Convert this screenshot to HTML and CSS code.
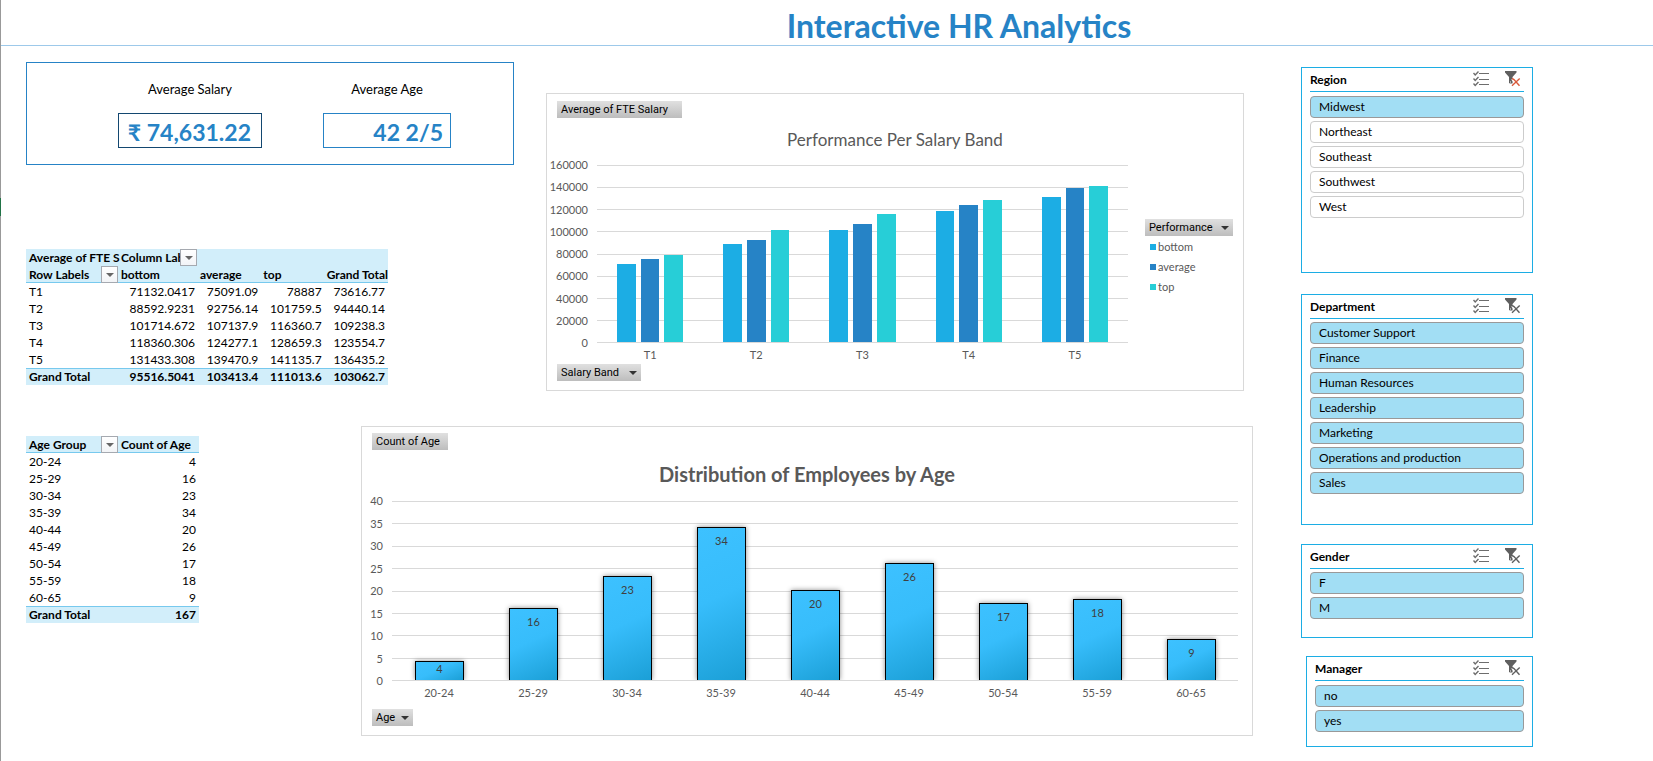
FILE: index.html
```html
<!DOCTYPE html>
<html lang="en">
<head>
<meta charset="utf-8">
<title>Interactive HR Analytics</title>
<link rel="stylesheet" href="styles.css">
</head>
<body>
<svg class="sprite" aria-hidden="true">
  <symbol id="checks" viewBox="0 0 16 16">
    <g fill="none" stroke="#6d6d6d">
      <path d="M6 2.5h10M6 8.5h10M6 13.5h10" stroke-width="1"/>
      <path d="M.5 2l1.700 1.900L5.500.500M.500 7.500l1.700 1.900L5.500 6M.500 12.500l1.700 1.900L5.500 11" stroke-width="1.400"/>
    </g>
  </symbol>
  <symbol id="funnel" viewBox="0 0 16 16">
    <path d="M0 0h11.500v1.500L7.500 6v6H6V10.500H4V6L0 1.500z" fill="#5f5f5f"/>
    <path d="M7.500 7.500l7 7M14.500 7.500l-7.500 7.500" fill="none" stroke="#fff" stroke-width="3.500"/>
    <path d="M4.500 6v6h3" fill="none" stroke="#5f5f5f"/>
    <path class="cross" d="M7 7.500l2 1 5.500 6.200M14.700 7.500L11 11l-4 3.700" fill="none" stroke-width="1.400"/>
  </symbol>
</svg>
<span class="row-marker"></span>
<header class="banner"><h1>Interactive HR Analytics</h1></header>
<main class="page">
  <div class="board">
    <div class="board-row">
      <div class="summary">
        <section class="kpis">
          <div class="kpi kpi-salary"><h2>Average Salary</h2><output>₹ 74,631.22</output></div>
          <div class="kpi kpi-age"><h2>Average Age</h2><output>42 2/5</output></div>
        </section>
        <table class="pivot pivot-salary">
          <colgroup><col class="c-label"><col class="c-wide"><col class="c-num"><col class="c-num"><col class="c-num"></colgroup>
          <thead>
            <tr><th class="over">Average of FTE S</th><th><div class="clip">Column Labels</div><button class="drop" aria-label="Filter columns"></button></th><th></th><th></th><th></th></tr>
            <tr><th>Row Labels<button class="drop" aria-label="Filter rows"></button></th><th>bottom</th><th>average</th><th>top</th><th>Grand Total</th></tr>
          </thead>
          <tbody>
            <tr><td>T1</td><td>71132.0417</td><td>75091.09</td><td>78887</td><td>73616.77</td></tr>
            <tr><td>T2</td><td>88592.9231</td><td>92756.14</td><td>101759.5</td><td>94440.14</td></tr>
            <tr><td>T3</td><td>101714.672</td><td>107137.9</td><td>116360.7</td><td>109238.3</td></tr>
            <tr><td>T4</td><td>118360.306</td><td>124277.1</td><td>128659.3</td><td>123554.7</td></tr>
            <tr><td>T5</td><td>131433.308</td><td>139470.9</td><td>141135.7</td><td>136435.2</td></tr>
          </tbody>
          <tfoot><tr><td>Grand Total</td><td>95516.5041</td><td>103413.4</td><td>111013.6</td><td>103062.7</td></tr></tfoot>
        </table>
      </div>
      <figure class="chart chart-salary">
        <button class="field field-value">Average of FTE Salary</button>
        <figcaption>Performance Per Salary Band</figcaption>
        <div class="chart-body">
          <div class="y-axis"><span>160000</span><span>140000</span><span>120000</span><span>100000</span><span>80000</span><span>60000</span><span>40000</span><span>20000</span><span>0</span></div>
          <div class="plot">
            <div class="lines"><i></i><i></i><i></i><i></i><i></i><i></i><i></i><i></i><i></i></div>
            <div class="group"><b class="bottom" style="height:44.100%"></b><b class="average" style="height:46.900%"></b><b class="top" style="height:49.300%"></b></div>
            <div class="group"><b class="bottom" style="height:55.400%"></b><b class="average" style="height:57.600%"></b><b class="top" style="height:63.300%"></b></div>
            <div class="group"><b class="bottom" style="height:63.300%"></b><b class="average" style="height:66.700%"></b><b class="top" style="height:72.400%"></b></div>
            <div class="group"><b class="bottom" style="height:74%"></b><b class="average" style="height:77.400%"></b><b class="top" style="height:80.300%"></b></div>
            <div class="group"><b class="bottom" style="height:81.900%"></b><b class="average" style="height:87%"></b><b class="top" style="height:88.200%"></b></div>
          </div>
          <div class="legend">
            <button class="field field-menu">Performance</button>
            <ul><li><i class="bottom"></i>bottom</li><li><i class="average"></i>average</li><li><i class="top"></i>top</li></ul>
          </div>
          <div class="x-axis"><span>T1</span><span>T2</span><span>T3</span><span>T4</span><span>T5</span></div>
        </div>
        <button class="field field-menu">Salary Band</button>
      </figure>
    </div>
    <div class="board-row">
      <table class="pivot pivot-age">
        <colgroup><col class="c-label"><col class="c-count"></colgroup>
        <thead><tr><th>Age Group<button class="drop" aria-label="Filter age groups"></button></th><th>Count of Age</th></tr></thead>
        <tbody>
          <tr><td>20-24</td><td>4</td></tr>
          <tr><td>25-29</td><td>16</td></tr>
          <tr><td>30-34</td><td>23</td></tr>
          <tr><td>35-39</td><td>34</td></tr>
          <tr><td>40-44</td><td>20</td></tr>
          <tr><td>45-49</td><td>26</td></tr>
          <tr><td>50-54</td><td>17</td></tr>
          <tr><td>55-59</td><td>18</td></tr>
          <tr><td>60-65</td><td>9</td></tr>
        </tbody>
        <tfoot><tr><td>Grand Total</td><td>167</td></tr></tfoot>
      </table>
      <figure class="chart chart-age">
        <button class="field field-value">Count of Age</button>
        <figcaption>Distribution of Employees by Age</figcaption>
        <div class="chart-body">
          <div class="y-axis"><span>40</span><span>35</span><span>30</span><span>25</span><span>20</span><span>15</span><span>10</span><span>5</span><span>0</span></div>
          <div class="plot">
            <div class="lines"><i></i><i></i><i></i><i></i><i></i><i></i><i></i><i></i><i></i></div>
            <div class="group"><b class="short" style="height:10.500%">4</b></div>
            <div class="group"><b style="height:40.300%">16</b></div>
            <div class="group"><b style="height:58%">23</b></div>
            <div class="group"><b style="height:85.500%">34</b></div>
            <div class="group"><b style="height:50.300%">20</b></div>
            <div class="group"><b style="height:65.500%">26</b></div>
            <div class="group"><b style="height:43%">17</b></div>
            <div class="group"><b style="height:45.300%">18</b></div>
            <div class="group"><b style="height:23%">9</b></div>
          </div>
          <div class="x-axis"><span>20-24</span><span>25-29</span><span>30-34</span><span>35-39</span><span>40-44</span><span>45-49</span><span>50-54</span><span>55-59</span><span>60-65</span></div>
        </div>
        <button class="field field-menu">Age</button>
      </figure>
    </div>
  </div>
  <aside class="slicers">
    <section class="slicer slicer-region filtered">
      <header><h2>Region</h2><button aria-label="Multi-select"><svg><use href="#checks"/></svg></button><button aria-label="Clear filter"><svg><use href="#funnel"/></svg></button></header>
      <button class="item" aria-pressed="true">Midwest</button>
      <button class="item" aria-pressed="false">Northeast</button>
      <button class="item" aria-pressed="false">Southeast</button>
      <button class="item" aria-pressed="false">Southwest</button>
      <button class="item" aria-pressed="false">West</button>
    </section>
    <section class="slicer slicer-department">
      <header><h2>Department</h2><button aria-label="Multi-select"><svg><use href="#checks"/></svg></button><button aria-label="Clear filter"><svg><use href="#funnel"/></svg></button></header>
      <button class="item" aria-pressed="true">Customer Support</button>
      <button class="item" aria-pressed="true">Finance</button>
      <button class="item" aria-pressed="true">Human Resources</button>
      <button class="item" aria-pressed="true">Leadership</button>
      <button class="item" aria-pressed="true">Marketing</button>
      <button class="item" aria-pressed="true">Operations and production</button>
      <button class="item" aria-pressed="true">Sales</button>
    </section>
    <section class="slicer slicer-gender">
      <header><h2>Gender</h2><button aria-label="Multi-select"><svg><use href="#checks"/></svg></button><button aria-label="Clear filter"><svg><use href="#funnel"/></svg></button></header>
      <button class="item" aria-pressed="true">F</button>
      <button class="item" aria-pressed="true">M</button>
    </section>
    <section class="slicer slicer-manager">
      <header><h2>Manager</h2><button aria-label="Multi-select"><svg><use href="#checks"/></svg></button><button aria-label="Clear filter"><svg><use href="#funnel"/></svg></button></header>
      <button class="item" aria-pressed="true">no</button>
      <button class="item" aria-pressed="true">yes</button>
    </section>
  </aside>
</main>
</body>
</html>
```
FILE: styles.css
```css
* { box-sizing: border-box; }
body {
  margin: 0;
  min-height: 100vh;
  border-left: 1px solid #999;
  background: #fff;
  color: #000;
  font: 12px/16px Lato, "Liberation Sans", sans-serif;
}
h1, h2, figure, ul { margin: 0; padding: 0; }
button { font: inherit; color: inherit; margin: 0; padding: 0; border: 0; background: none; }
.sprite { position: absolute; width: 0; height: 0; }
.row-marker { position: absolute; left: 0; top: 198px; width: 1px; height: 18px; background: #217346; }

.banner { border-bottom: 1px solid #9dc9ea; padding: 8px 0 1px 264px; }
.banner h1 { text-align: center; font-size: 32px; line-height: 36px; color: #2683c6; }

.page { display: flex; gap: 48px; padding: 16px 120px 14px 25px; }
.board { flex: 1; display: flex; flex-direction: column; gap: 35px; }
.board-row { display: flex; align-items: flex-start; }

.summary { display: flex; flex-direction: column; flex-shrink: 0; gap: 84px; width: 488px; }
.kpis { display: flex; gap: 61px; padding: 18px 0 16px 91px; border: 1px solid #2683c6; }
.kpi { display: flex; flex-direction: column; gap: 16px; }
.kpi h2 { font-size: 13px; line-height: 16px; font-weight: 400; text-align: center; }
.kpi output {
  border: 1px solid #2683c6;
  padding: 4px 7px 0;
  font-size: 23px;
  line-height: 29px;
  font-weight: 700;
  text-align: right;
  white-space: nowrap;
  color: #2683c6;
}
.kpi-salary { width: 144px; }
.kpi-salary output { border-color: #134770; padding-right: 10px; }
.kpi-age { width: 128px; }

.pivot { table-layout: fixed; border-spacing: 0; line-height: 16px; }
.pivot-salary { width: 362px; }
.pivot-age { width: 173px; margin-top: 10px; }
.c-label { width: 93px; }
.c-wide { width: 79px; }
.c-count { width: 80px; }
.pivot th, .pivot td { position: relative; height: 17px; padding: 1px 3px 0; text-align: right; white-space: nowrap; }
.pivot th { padding: 1px 2px 0; text-align: left; background: #d2eefa; }
.pivot .over { z-index: 1; }
.pivot th:first-child, .pivot td:first-child { padding-left: 3px; text-align: left; }
.pivot thead tr:last-child th { border-bottom: 1px solid #77c9ee; line-height: 15px; }
.pivot tfoot td { padding-top: 0; background: #d2eefa; border-top: 1px solid #77c9ee; font-weight: 700; line-height: 16px; }
.clip { overflow: hidden; }
.drop { position: absolute; right: 1px; top: 0; width: 17px; height: 17px; border: 1px solid #a5a9b0; background: linear-gradient(#fff, #f2f4f7); }
.drop::after { content: ""; position: absolute; left: 4px; top: 6px; border: 4px solid transparent; border-top-color: #666; border-bottom: 0; }

.chart { display: flex; flex-direction: column; align-items: flex-start; flex: 1; min-width: 0; border: 1px solid #d9d9d9; color: #595959; }
.chart-salary { margin: 31px 9px 0 32px; padding: 7px 0 9px; }
.chart-age { margin-left: 162px; padding: 6px 0 9px; }
.chart > .field { margin-left: 10px; }
.chart figcaption { align-self: stretch; text-align: center; }
.chart-salary figcaption { margin: 11px 0 14px; font-size: 17px; line-height: 22px; }
.chart-age figcaption { margin: 12px 0 15px; font-size: 20px; line-height: 24px; font-weight: 700; }
.field {
  height: 17px;
  padding: 0 4px;
  background: linear-gradient(#e0e0e0, #bdbdbd);
  color: #000;
  font: 11px/17px Roboto, "Noto Sans", sans-serif;
  text-align: left;
  white-space: nowrap;
}
.field-value { padding-right: 14px; }
.chart-age .field-value { padding-right: 8px; }
.field-menu { display: flex; align-items: center; justify-content: space-between; gap: 6px; padding-right: 4px; }
.field-menu::after { content: ""; border: 4px solid transparent; border-top-color: #333; border-bottom: 0; }
.chart-salary > .field-menu { min-width: 84px; }
.legend .field-menu { min-width: 88px; }
.chart-body { align-self: stretch; display: grid; font-size: 11px; }
.chart-salary .chart-body { grid-template: 178px 21px / 50px 1fr 115px; }
.chart-age .chart-body { grid-template: 180px 28px / 30px 1fr 14px; }
.y-axis { display: flex; flex-direction: column; justify-content: space-between; margin: -7px 0; padding-right: 9px; text-align: right; line-height: 14px; }
.plot { position: relative; display: flex; padding-bottom: 1px; }
.lines { position: absolute; inset: 0; display: flex; flex-direction: column; justify-content: space-between; }
.lines i { height: 1px; background: #d9d9d9; }
.group { position: relative; flex: 1; display: flex; align-items: flex-end; gap: 5px; padding: 0 20px; }
.group b { flex: 1; }
.bottom { background: #1cade4; }
.average { background: #2683c6; }
.top { background: #27ced7; }
.chart-age .group { padding: 0 22px 0 23px; }
.chart-age .group b {
  border: 1px solid #000;
  border-bottom: 0;
  padding-top: 6px;
  background: linear-gradient(155deg, #3dc1ff 0%, #37bdfb 45%, #1b9fd6 100%);
  box-shadow: 0 0 5px rgba(0, 0, 0, .45);
  clip-path: inset(-6px -6px 0);
  color: #404040;
  font-weight: 400;
  line-height: 14px;
  text-align: center;
}
.chart-age .group .short { padding-top: 0; }
.x-axis { grid-column: 2; display: flex; padding-top: 3px; line-height: 17px; }
.x-axis span { flex: 1; text-align: center; }
.legend { display: flex; flex-direction: column; align-items: flex-start; padding: 54px 0 0 17px; }
.legend ul { list-style: none; padding: 1px 0 0 5px; }
.legend li { display: flex; align-items: center; gap: 2px; height: 20px; }
.legend i { width: 6px; height: 6px; }

.slicers { display: flex; flex-direction: column; gap: 19px; width: 232px; padding-top: 5px; }
.slicer { display: flex; flex-direction: column; gap: 3px; padding: 0 8px; border: 1px solid #1cade4; }
.slicer-region { min-height: 206px; margin-bottom: 2px; }
.slicer-department { min-height: 231px; }
.slicer-gender { min-height: 94px; }
.slicer-manager { min-height: 91px; margin: -1px 0 0 5px; }
.slicer header { display: flex; align-items: flex-start; height: 24px; border-bottom: 1px solid #1cade4; }
.slicer-region header, .slicer-manager header { margin-bottom: 1px; }
.slicer h2 { flex: 1; font-size: 12px; line-height: 24px; }
.slicer header button { width: 16px; height: 16px; margin: 3px 3px 0 13px; }
.slicer header svg { display: block; width: 16px; height: 16px; }
.filtered { --cross: #d9593a; }
.cross { stroke: var(--cross, #5f5f5f); }
.item { height: 22px; padding: 0 8px; border: 1px solid #ccc; border-radius: 4px; background: #fff; text-align: left; line-height: 20px; }
.item[aria-pressed="true"] { border-color: #999; background: #a2def4; }
```
